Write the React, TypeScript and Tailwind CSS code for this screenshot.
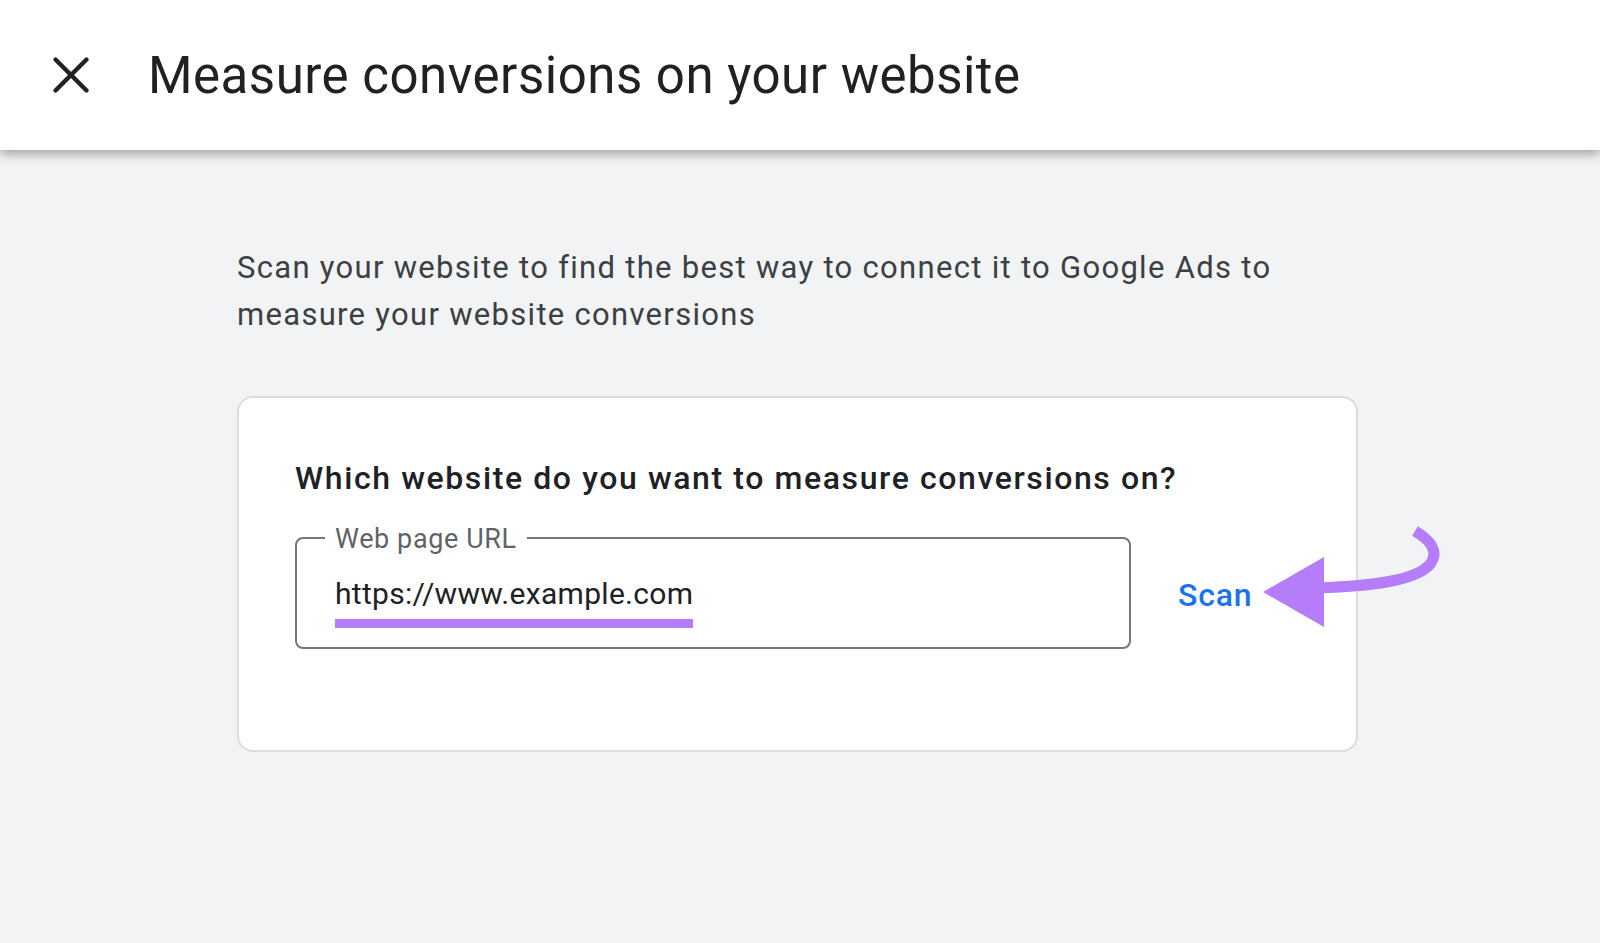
import { X } from 'lucide-react';

export default function App() {
  return (
    <div className="relative min-h-screen w-full bg-[#f1f3f4] font-['Roboto',sans-serif] overflow-hidden">
      {/* Header */}
      <header className="relative z-10 h-[150px] bg-white shadow-[0_4px_10px_rgba(60,64,67,0.45)] flex items-center">
        <button className="ml-[40px] w-[62px] h-[62px] flex items-center justify-center text-[#202124]">
          <X className="w-[62px] h-[62px]" strokeWidth={1.7} />
        </button>
        <h1 className="ml-[46px] text-[51px] leading-none text-[#202124] tracking-[0.5px]">
          Measure conversions on your website
        </h1>
      </header>

      {/* Body */}
      <main className="pl-[237px] pt-[94px]">
        <p className="text-[31px] leading-[47px] text-[#3c4043] tracking-[1.3px] w-[1110px]">
          Scan your website to find the best way to connect it to Google Ads to measure your website conversions
        </p>

        <div className="mt-[58px] w-[1121px] h-[356px] bg-white border-2 border-[#dadce0] rounded-[16px] pl-[56px] pt-[60px]">
          <h2 className="text-[32px] leading-[40px] font-medium text-[#202124] tracking-[1.6px]">
            Which website do you want to measure conversions on?
          </h2>

          <div className="mt-[39px] flex items-center">
            {/* Outlined text field */}
            <div className="relative w-[836px] h-[112px] border-2 border-[#74777c] rounded-[8px] pl-[38px] pt-[36px]">
              <span className="absolute -top-[15px] left-[28px] bg-white px-[10px] text-[27px] leading-[30px] text-[#5f6368] tracking-[0.6px]">
                Web page URL
              </span>
              <div className="inline-flex flex-col">
                <span className="text-[30px] leading-[38px] text-[#202124] tracking-[0.3px]">
                  https://www.example.com
                </span>
                <span className="mt-[6px] h-[9px] bg-[#b57dfa]" />
              </div>
            </div>

            <button className="ml-[47px] mt-[4px] text-[32px] leading-none font-medium text-[#1a73e8] tracking-[0.8px]">
              Scan
            </button>
          </div>
        </div>
      </main>

      {/* Annotation arrow */}
      <svg
        className="absolute left-0 top-0 pointer-events-none"
        width="1600"
        height="943"
        viewBox="0 0 1600 943"
      >
        <path
          d="M1318 588 C 1370 586, 1418 581, 1431 563 C 1439 551, 1430 540, 1415 531"
          fill="none"
          stroke="#b57dfa"
          strokeWidth="11"
        />
        <polygon points="1263,592 1324,557 1324,627" fill="#b57dfa" />
      </svg>
    </div>
  );
}
